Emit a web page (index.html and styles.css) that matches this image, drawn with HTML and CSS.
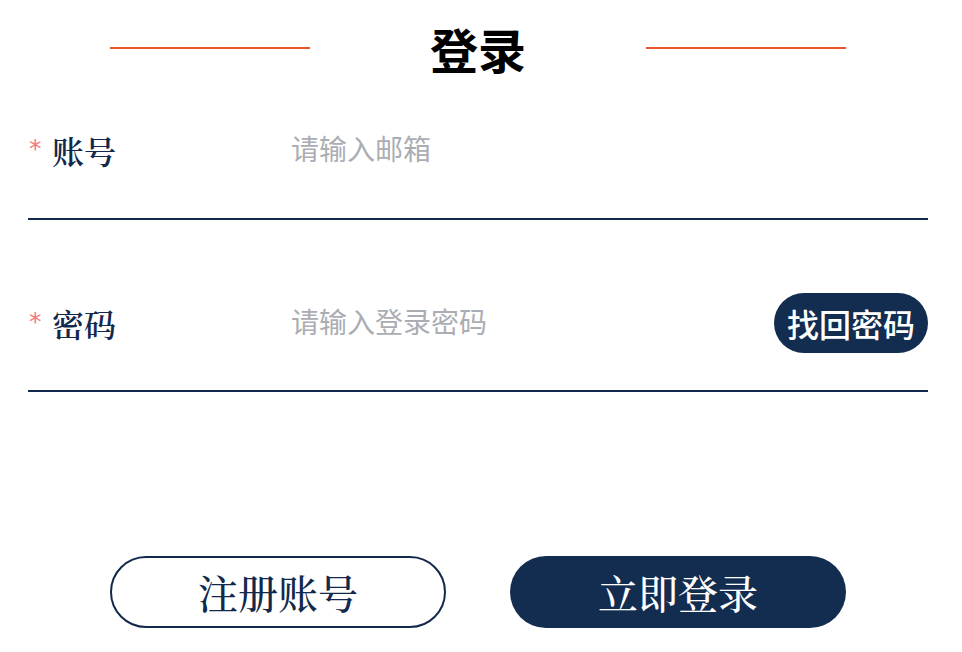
FILE: index.html
```html
<!DOCTYPE html>
<html lang="zh-CN">
<head>
<meta charset="utf-8">
<title>登录</title>
<link rel="stylesheet" href="styles.css">
</head>
<body>
<div class="page">
  <header class="head">
    <span class="rule"></span>
    <h1 class="title">登录</h1>
    <span class="rule"></span>
  </header>
  <div class="field field-account">
    <div class="label"><span class="req">*</span><span class="label-text">账号</span></div>
    <div class="input">请输入邮箱</div>
  </div>
  <div class="field field-password">
    <div class="label"><span class="req">*</span><span class="label-text">密码</span></div>
    <div class="input">请输入登录密码</div>
    <button class="forgot">找回密码</button>
  </div>
  <div class="actions">
    <button class="btn btn-outline">注册账号</button>
    <button class="btn btn-solid">立即登录</button>
  </div>
</div>
</body>
</html>
```
FILE: styles.css
```css
html, body {
  margin: 0;
  padding: 0;
  background: #ffffff;
}
body {
  font-family: "Noto Sans CJK SC", "Noto Sans", sans-serif;
  width: 962px;
  height: 652px;
  overflow: hidden;
}
.page {
  width: 900px;
  margin-left: 28px;
  display: flex;
  flex-direction: column;
}
.head {
  height: 96px;
  display: flex;
  align-items: center;
  justify-content: space-between;
  padding: 0 82px;
}
.rule {
  width: 200px;
  height: 2px;
  background: #e9532e;
}
.title {
  margin: 0;
  font-size: 48px;
  line-height: 1;
  font-weight: 700;
  color: #000;
}
.field {
  display: flex;
  align-items: center;
  border-bottom: 2px solid #13294b;
}
.field-account {
  height: 108px;
  padding-bottom: 14px;
}
.field-password {
  height: 134px;
  padding-top: 36px;
}
.label {
  width: 263px;
  display: flex;
  align-items: center;
  flex-shrink: 0;
}
.req {
  color: #f47a7a;
  font-family: "DejaVu Sans", sans-serif;
  font-size: 25px;
  line-height: 1;
  width: 23px;
  align-self: flex-start;
  margin-top: 2px;
  padding-left: 1px;
}
.label-text {
  font-family: "Noto Serif CJK SC", "Source Han Serif SC", serif;
  font-size: 32px;
  font-weight: 600;
  color: #13294b;
  line-height: 1;
}
.input {
  flex: 1;
  font-size: 28px;
  color: #aaadb3;
  line-height: 1;
  margin-top: -4px;
}
.forgot {
  height: 60px;
  padding: 0 13px;
  border: none;
  border-radius: 30px;
  background: #122d4f;
  color: #fff;
  font-family: "Noto Sans CJK SC", sans-serif;
  font-size: 32px;
  font-weight: 500;
  line-height: 1;
}
.actions {
  margin-top: 164px;
  display: flex;
  justify-content: center;
  gap: 64px;
}
.btn {
  width: 336px;
  height: 72px;
  border-radius: 36px;
  font-family: "Noto Serif CJK SC", "Source Han Serif SC", serif;
  font-size: 40px;
  font-weight: 500;
  line-height: 1;
  padding: 0;
  box-sizing: border-box;
}
.btn-outline {
  background: #fff;
  border: 2px solid #13294b;
  color: #13294b;
}
.btn-solid {
  background: #122d4f;
  border: none;
  color: #fff;
}
```
